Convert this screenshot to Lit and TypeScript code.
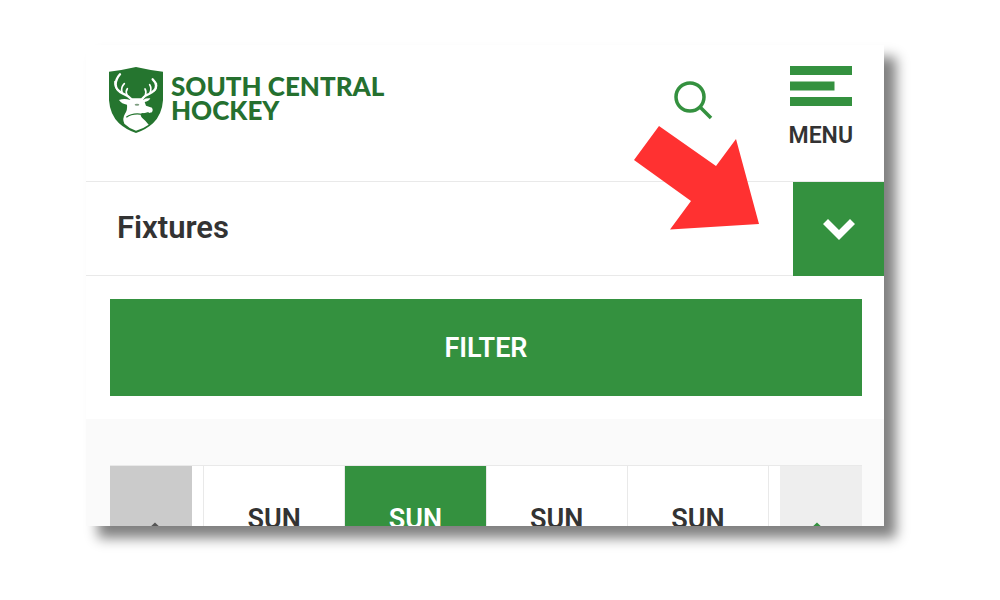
import { LitElement, html, css, svg } from "lit";
import { customElement, state } from "lit/decorators.js";

const stag = svg`
  <path fill="#25752f" d="M28 52Q66 48 109 38Q152 48 190 52V138Q187 181 160 207Q138 227 109 236Q80 227 58 207Q31 181 28 138Z"/>
  <g fill="none" stroke="#fff" stroke-linecap="round">
    <path stroke-width="7" d="M97 136Q86 124 70 118Q48 108 48 90Q49 73 61 60M126 136Q133 124 148 119Q170 108 169 93Q168 83 159 75"/>
    <path stroke-width="5" d="M55 108Q45 99 46 82M67 113Q63 99 74 88M82 122Q77 111 83 103M164 109Q172 103 170 88M151 116Q157 101 150 91M137 123Q141 112 136 104"/>
  </g>
  <path fill="#fff" d="M58 137Q74 131 92 137L98 132H124L131 136Q139 131 152 132Q147 142 135 143L139 154L157 160Q162 168 157 174Q144 178 127 176Q119 181 127 190Q139 200 147 211Q131 223 109 229Q88 222 74 208Q67 193 76 178Q84 166 82 151Q66 149 58 137Z"/>
  <path fill="none" stroke="#25752f" stroke-width="4" d="M80 189Q98 175 128 180L147 175"/>
  <ellipse cx="112" cy="151" rx="7" ry="3" fill="#7d9d80"/>`;

@customElement("app-root")
export class AppRoot extends LitElement {
  @state() private selected = 1;
  private days = ["SUN", "SUN", "SUN", "SUN"];

  static styles = css`
    :host {
      display: flex;
      box-sizing: border-box;
      height: 100vh;
      padding: 45px 116px 74px 86px;
      background: #fff;
      color: #333;
      font-family: Roboto, sans-serif;
      --green: #34913f;
      --line: #e9e9e9;
      position: relative;
    }
    button {
      border: 0;
      padding: 0;
      margin: 0;
      font: inherit;
      color: inherit;
      background: none;
      cursor: pointer;
    }
    svg { display: block; }
    .screen {
      flex: 1;
      min-width: 0;
      overflow: hidden;
      background: #fff;
      box-shadow: 12px 12px 12px #808080;
    }
    .header {
      display: flex;
      align-items: flex-start;
      box-sizing: border-box;
      height: 137px;
      padding: 21px 31px 0 23px;
      border-bottom: 1px solid var(--line);
    }
    .brand {
      display: flex;
      gap: 8px;
      margin-top: 1px;
      color: #25702f;
      font: 900 26px/24px Lato, sans-serif;
      text-decoration: none;
    }
    .name {
      display: grid;
      align-content: start;
      padding-top: 7px;
    }
    .search { margin: 15px 76px 0 auto; }
    .menu {
      display: grid;
      gap: 16px;
      justify-items: center;
      font-weight: 600;
      font-size: 23px;
      line-height: 28px;
    }
    .title-bar {
      display: flex;
      align-items: stretch;
      justify-content: space-between;
      height: 94px;
    }
    .title {
      flex: 1;
      margin: 0;
      padding-left: 31px;
      border-bottom: 1px solid var(--line);
      font-size: 31px;
      font-weight: 600;
      line-height: 92px;
    }
    .toggle {
      display: grid;
      place-items: center;
      width: 91px;
      background: var(--green);
    }
    .filter-area { padding: 23px 22px 23px 24px; }
    .filter {
      display: block;
      width: 100%;
      height: 97px;
      background: var(--green);
      color: #fff;
      font-size: 27px;
      font-weight: 600;
    }
    .calendar {
      padding: 46px 22px 0 24px;
      background: #fafafa;
    }
    .week {
      display: flex;
      border-top: 1px solid var(--line);
      background: #fff;
    }
    .step {
      display: flex;
      justify-content: center;
      align-items: flex-start;
      box-sizing: border-box;
      width: 82px;
      padding: 56px 8px 0 0;
      background: #eee;
      color: var(--green);
    }
    .prev {
      padding: 56px 0 0 8px;
      background: #cbcbcb;
      color: #555;
    }
    .days {
      flex: 1;
      display: flex;
      margin: 0 11px;
      border-right: 1px solid var(--line);
    }
    .day {
      flex: 1;
      height: 140px;
      padding: 38px 0 71px;
      border-left: 1px solid var(--line);
      font-size: 27px;
      font-weight: 600;
      line-height: 31px;
    }
    .day.on { background: var(--green); color: #fff; }
    .pointer {
      position: absolute;
      right: 241px;
      top: 126px;
      pointer-events: none;
    }
  `;

  render() {
    return html`
      <main class="screen">
        <header class="header">
          <a class="brand" href="#">
            <svg width="54" height="66" viewBox="28 38 162 198" aria-hidden="true">${stag}</svg>
            <span class="name"><span>SOUTH CENTRAL</span><span>HOCKEY</span></span>
          </a>
          <button class="search" aria-label="Search">
            <svg width="39" height="39" viewBox="0 0 39 39" fill="none" stroke="#34913f" stroke-width="3.5">
              <circle cx="16" cy="16" r="14" /><path d="M26 26L37 37" />
            </svg>
          </button>
          <button class="menu">
            <svg width="62" height="40" viewBox="0 0 62 40" fill="#34913f">
              <path d="M0 0H62V9H0ZM0 15.500H44.500V24.500H0ZM0 31H62V40H0Z" />
            </svg>
            MENU
          </button>
        </header>
        <section class="title-bar">
          <h1 class="title">Fixtures</h1>
          <button class="toggle" aria-label="Show sections">
            <svg width="32" height="21" viewBox="0 0 32 21" fill="#fff">
              <path d="M5 0L16 11L27 0L32 5L16 21L0 5Z" />
            </svg>
          </button>
        </section>
        <div class="filter-area"><button class="filter">FILTER</button></div>
        <section class="calendar">
          <div class="week">
            <button class="step prev" aria-label="Previous week">
              <svg width="16" height="14" viewBox="0 0 16 14"><path fill="currentColor" d="M8 0.500L16 8V14H0V8Z" /></svg>
            </button>
            <div class="days">
              ${this.days.map(
                (d, i) => html`<button
                  class="day ${i === this.selected ? "on" : ""}"
                  @click=${() => (this.selected = i)}
                >${d}</button>`
              )}
            </div>
            <button class="step" aria-label="Next week">
              <svg width="16" height="14" viewBox="0 0 16 14"><path fill="currentColor" d="M8 0.500L16 8V14H0V8Z" /></svg>
            </button>
          </div>
        </section>
      </main>
      <svg class="pointer" width="125" height="104" viewBox="0 0 125 104" aria-hidden="true">
        <path fill="#ff3131" d="M25 0L82 40L102 13L125 98L36 103.500L57 75L0 34Z" />
      </svg>
    `;
  }
}
